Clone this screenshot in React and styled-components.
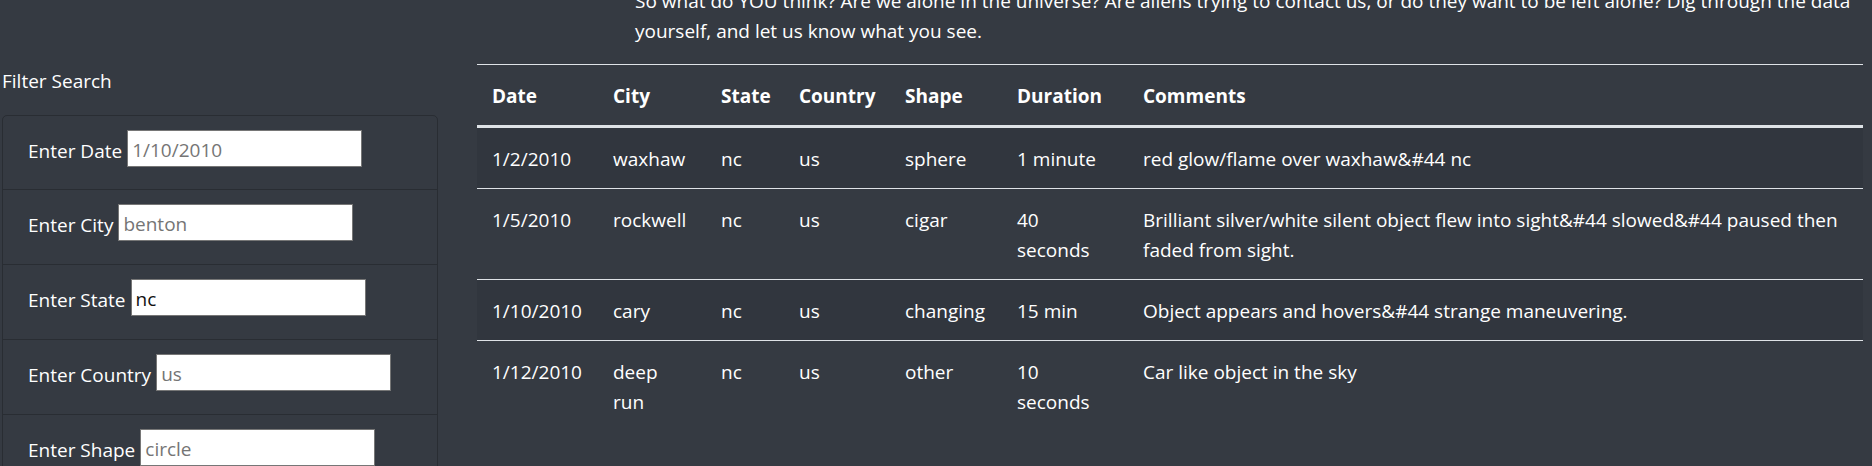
import React from "react";
import styled, { createGlobalStyle } from "styled-components";

const GlobalStyle = createGlobalStyle`
  html, body {
    margin: 0;
    padding: 0;
    background: #353a42;
    color: #ffffff;
    font-family: "Open Sans", "Noto Sans", Arial, sans-serif;
    font-size: 19px;
    line-height: 30px;
    overflow: hidden;
  }
  * { box-sizing: border-box; }
`;

const Page = styled.div`
  display: grid;
  grid-template-columns: 441px 1386px;
  column-gap: 36px;
  align-items: start;
  width: 1872px;
  height: 466px;
  overflow: hidden;
`;

const Sidebar = styled.aside`
  display: flex;
  flex-direction: column;
  gap: 19px;
  padding: 66px 3px 0 2px;
`;

const SidebarTitle = styled.h5`
  margin: 0;
  font-size: 19px;
  font-weight: 400;
  line-height: 30px;
`;

const FilterCard = styled.ul`
  list-style: none;
  margin: 0;
  padding: 0;
  border: 1px solid rgba(0, 0, 0, 0.22);
  border-radius: 5px;
`;

const FilterItem = styled.li`
  display: flex;
  align-items: flex-start;
  height: 75px;
  padding: 14px 25px 0;
  border-top: 1px solid rgba(0, 0, 0, 0.22);

  &:first-child {
    height: 73px;
    border-top: none;
  }
`;

const FilterLabel = styled.label`
  margin-top: 6px;
  line-height: 30px;
  white-space: nowrap;
`;

const FilterInput = styled.input`
  width: 235px;
  height: 37px;
  margin-left: 5px;
  padding: 2px 4px 0;
  border: 1px solid #767676;
  border-radius: 0;
  background: #ffffff;
  color: #111111;
  font-family: "Open Sans", "Noto Sans", Arial, sans-serif;
  font-size: 19px;
  outline: none;

  &::placeholder {
    color: #757575;
  }
`;

const Main = styled.main`
  display: flex;
  flex-direction: column;
`;

const Intro = styled.p`
  margin: -14px 0 18px 158px;
  line-height: 30px;
`;

const Table = styled.table`
  width: 1386px;
  table-layout: fixed;
  border-collapse: collapse;
`;

const HeadCell = styled.th`
  width: ${(p) => (p.$w ? `${p.$w}px` : "auto")};
  padding: 16px 15px 14px;
  text-align: left;
  font-weight: 700;
  line-height: 30px;
  vertical-align: bottom;
  border-top: 1px solid #dee2e6;
  border-bottom: 3px solid #dee2e6;
`;

const BodyRow = styled.tr`
  background: ${(p) => (p.$odd ? "rgba(0, 0, 0, 0.06)" : "transparent")};
`;

const Cell = styled.td`
  padding: 16px 15px 14px;
  line-height: 30px;
  vertical-align: top;
  border-top: 1px solid #dee2e6;
`;

const filters = [
  { label: "Enter Date", placeholder: "1/10/2010" },
  { label: "Enter City", placeholder: "benton" },
  { label: "Enter State", value: "nc" },
  { label: "Enter Country", placeholder: "us" },
  { label: "Enter Shape", placeholder: "circle" },
];

const columns = [
  ["Date", 121],
  ["City", 108],
  ["State", 78],
  ["Country", 106],
  ["Shape", 112],
  ["Duration", 126],
  ["Comments", null],
];

const rows = [
  ["1/2/2010", "waxhaw", "nc", "us", "sphere", "1 minute", "red glow/flame over waxhaw&#44 nc"],
  [
    "1/5/2010",
    "rockwell",
    "nc",
    "us",
    "cigar",
    "40 seconds",
    "Brilliant silver/white silent object flew into sight&#44 slowed&#44 paused then faded from sight.",
  ],
  ["1/10/2010", "cary", "nc", "us", "changing", "15 min", "Object appears and hovers&#44 strange maneuvering."],
  ["1/12/2010", "deep run", "nc", "us", "other", "10 seconds", "Car like object in the sky"],
];

export default function App() {
  return (
    <>
      <GlobalStyle />
      <Page>
        <Sidebar>
          <SidebarTitle>Filter Search</SidebarTitle>
          <FilterCard>
            {filters.map((f) => (
              <FilterItem key={f.label}>
                <FilterLabel>{f.label}</FilterLabel>
                <FilterInput
                  type="text"
                  placeholder={f.placeholder}
                  defaultValue={f.value}
                />
              </FilterItem>
            ))}
          </FilterCard>
        </Sidebar>
        <Main>
          <Intro>
            So what do YOU think? Are we alone in the universe? Are aliens trying to contact us,
            or do they want to be left alone? Dig through the data yourself, and let us know what
            you see.
          </Intro>
          <Table>
            <thead>
              <tr>
                {columns.map(([name, w]) => (
                  <HeadCell key={name} $w={w}>
                    {name}
                  </HeadCell>
                ))}
              </tr>
            </thead>
            <tbody>
              {rows.map((r, i) => (
                <BodyRow key={i} $odd={i % 2 === 0}>
                  {r.map((c, j) => (
                    <Cell key={j}>{c}</Cell>
                  ))}
                </BodyRow>
              ))}
            </tbody>
          </Table>
        </Main>
      </Page>
    </>
  );
}
